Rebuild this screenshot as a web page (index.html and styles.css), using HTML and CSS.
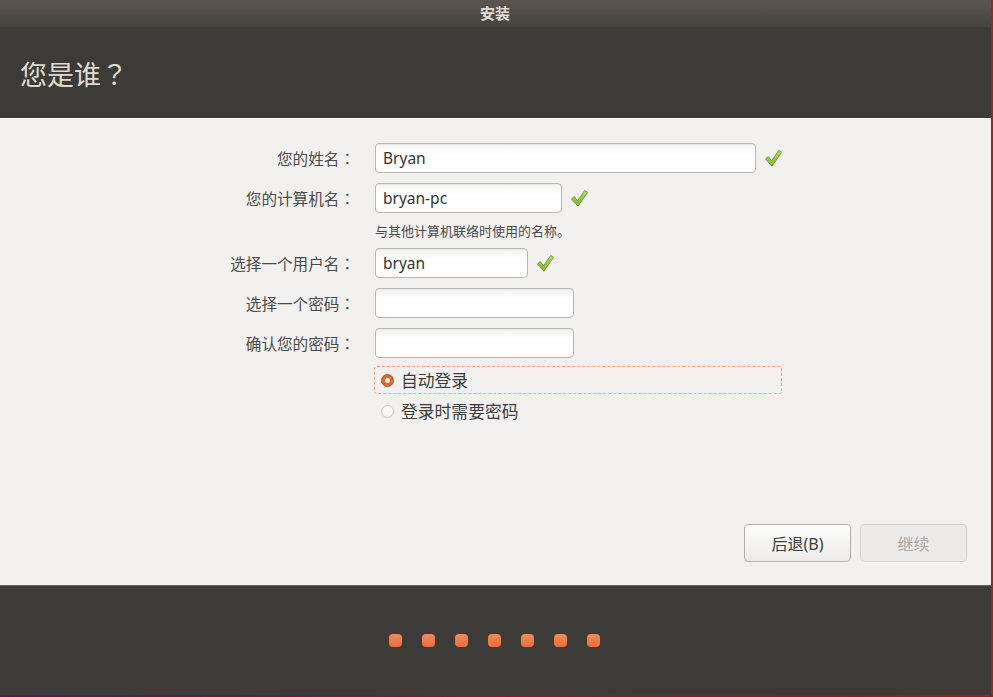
FILE: index.html
```html
<!DOCTYPE html>
<html lang="zh-CN">
<head>
<meta charset="utf-8">
<title>安装</title>
<link rel="stylesheet" href="styles.css">
</head>
<body>
<div class="window">
  <div class="titlebar">安装</div>
  <div class="header"><h1 class="heading">您是谁<span class="punct" lang="ja">？</span></h1></div>
  <div class="content">
    <div class="form">
      <label class="label">您的姓名<span class="punct" lang="ja">：</span></label>
      <div class="field"><div class="input w-name">Bryan</div><svg class="check" viewBox="0 0 20 20"><defs><linearGradient id="g1" x1="0" y1="0" x2="0" y2="1"><stop offset="0" stop-color="#b6dd6a"/><stop offset="1" stop-color="#7cb536"/></linearGradient></defs><path d="M1.5 10.5 L4.5 8 L8 12.5 L15.5 1.5 L18.5 3.5 L8.5 18 Z" fill="url(#g1)" stroke="#6c9a2c" stroke-width="1" stroke-linejoin="round"/></svg></div>

      <label class="label">您的计算机名<span class="punct" lang="ja">：</span></label>
      <div class="field"><div class="input w-pc">bryan-pc</div><svg class="check" viewBox="0 0 20 20"><path d="M1.5 10.5 L4.5 8 L8 12.5 L15.5 1.5 L18.5 3.5 L8.5 18 Z" fill="url(#g1)" stroke="#6c9a2c" stroke-width="1" stroke-linejoin="round"/></svg></div>

      <div></div>
      <div class="hint">与其他计算机联络时使用的名称。</div>

      <label class="label">选择一个用户名<span class="punct" lang="ja">：</span></label>
      <div class="field"><div class="input w-user">bryan</div><svg class="check" viewBox="0 0 20 20"><path d="M1.5 10.5 L4.5 8 L8 12.5 L15.5 1.5 L18.5 3.5 L8.5 18 Z" fill="url(#g1)" stroke="#6c9a2c" stroke-width="1" stroke-linejoin="round"/></svg></div>

      <label class="label">选择一个密码<span class="punct" lang="ja">：</span></label>
      <div class="field"><div class="input w-pass"></div></div>

      <label class="label">确认您的密码<span class="punct" lang="ja">：</span></label>
      <div class="field"><div class="input w-pass"></div></div>

      <div></div>
      <div class="radio-focus"><span class="radio on"></span><span class="radio-text">自动登录</span></div>

      <div></div>
      <div class="radio-row"><span class="radio"></span><span class="radio-text">登录时需要密码</span></div>
    </div>
    <div class="buttons">
      <button class="btn">后退(B)</button>
      <button class="btn disabled">继续</button>
    </div>
  </div>
  <div class="footer">
    <span class="dot"></span><span class="dot"></span><span class="dot"></span><span class="dot"></span><span class="dot"></span><span class="dot"></span><span class="dot"></span>
  </div>
  <div class="edge"></div>
</div>
</body>
</html>
```

FILE: styles.css
```css
html, body {
  margin: 0;
  padding: 0;
  background: #3c3b37;
}
body {
  font-family: "Noto Sans", "Noto Sans CJK SC", sans-serif;
  width: 993px;
  height: 697px;
  overflow: hidden;
  text-spacing-trim: space-all;
}
.window {
  width: 991px;
  height: 697px;
  border-right: 2px solid #962a1f;
  display: flex;
  flex-direction: column;
}
.titlebar {
  height: 27px;
  flex: none;
  background: linear-gradient(#5a564f, #45433e);
  color: #e2ded6;
  font-weight: bold;
  font-size: 15px;
  line-height: 26px;
  text-align: center;
  padding-right: 1px;
}
.header {
  height: 91px;
  flex: none;
  background: #3c3b37;
  display: flex;
  align-items: center;
  padding-left: 20px;
}
.heading {
  margin: 0;
  font-weight: normal;
  font-size: 27px;
  color: #dfdbd2;
  font-family: "Noto Sans CJK SC", sans-serif;
  padding-top: 2px;
}
.punct {
  font-family: "Noto Sans CJK JP", sans-serif;
  text-spacing-trim: space-all;
}
.content {
  height: 467px;
  flex: none;
  box-sizing: border-box;
  background: #f2f1f0;
  border-top: 1px solid #fbfbfa;
  padding-top: 24px;
  display: flex;
  flex-direction: column;
}
.form {
  display: grid;
  grid-template-columns: 355px 1fr;
  column-gap: 20px;
  row-gap: 10px;
  align-items: center;
}
.label {
  justify-self: end;
  font-size: 15.6px;
  color: #4a4a4a;
  font-family: "Noto Sans CJK SC", sans-serif;
}
.field {
  display: flex;
  align-items: center;
  gap: 8px;
}
.input {
  box-sizing: border-box;
  height: 30px;
  border: 1px solid #b9b7b3;
  border-radius: 4px;
  background: linear-gradient(#f4f4f3, #ffffff 40%);
  box-shadow: inset 0 1px 1px rgba(0,0,0,0.06);
  padding-left: 7px;
  font-size: 15.5px;
  line-height: 28px;
  color: #333;
}
.w-name { width: 381px; }
.w-pc { width: 187px; }
.w-user { width: 153px; }
.w-pass { width: 199px; }
.check {
  width: 19px;
  height: 19px;
}
.hint {
  font-size: 13px;
  line-height: 15px;
  color: #4a4a4a;
  font-family: "Noto Sans CJK SC", sans-serif;
}
.radio-focus {
  box-sizing: border-box;
  width: 408px;
  height: 28px;
  margin-left: -1px;
  margin-top: -2px;
  border: 1px dashed #f1a283;
  border-radius: 3px;
  display: flex;
  align-items: center;
  padding-left: 6px;
  gap: 7px;
}
.radio-row {
  height: 18px;
  margin-top: -2px;
  display: flex;
  align-items: center;
  padding-left: 6px;
  gap: 7px;
}
.radio {
  box-sizing: border-box;
  width: 13px;
  height: 13px;
  border-radius: 50%;
  border: 1px solid #cbc9c5;
  background: linear-gradient(#ffffff, #f1f0ee);
  flex: none;
  position: relative;
}
.radio.on {
  border-color: #c2532a;
  background: #e0662f;
}
.radio.on::after {
  content: "";
  position: absolute;
  left: 3px;
  top: 3px;
  width: 5px;
  height: 5px;
  border-radius: 50%;
  background: #fff3ec;
}
.radio-text {
  font-size: 16.8px;
  color: #3c3c3c;
  font-family: "Noto Sans CJK SC", sans-serif;
}
.buttons {
  margin-top: auto;
  padding-bottom: 23px;
  padding-right: 24px;
  display: flex;
  justify-content: flex-end;
  gap: 9px;
}
.btn {
  box-sizing: border-box;
  width: 107px;
  height: 38px;
  border: 1px solid #b1afab;
  border-radius: 4px;
  background: linear-gradient(#fdfdfc, #ecebe9);
  box-shadow: 0 1px 0 rgba(255,255,255,0.6);
  font-family: "Noto Sans", "Noto Sans CJK SC", sans-serif;
  font-size: 16px;
  color: #3c3c3c;
  padding: 0;
}
.btn.disabled {
  border-color: #d3d1cd;
  background: #ecebe9;
  color: #a9a7a3;
}
.footer {
  height: 110px;
  flex: none;
  box-sizing: border-box;
  background: #3c3b37;
  border-top: 1px solid #66645f;
  display: flex;
  align-items: center;
  justify-content: center;
  gap: 20px;
  padding-right: 3px;
}
.dot {
  width: 13px;
  height: 13px;
  border-radius: 4px;
  background: linear-gradient(#f58a55, #ea6e3c);
}
.edge {
  height: 2px;
  flex: none;
  margin-right: -2px;
  background: linear-gradient(90deg, #55194a, #7a1c36 50%, #8e1f1f);
}
```
